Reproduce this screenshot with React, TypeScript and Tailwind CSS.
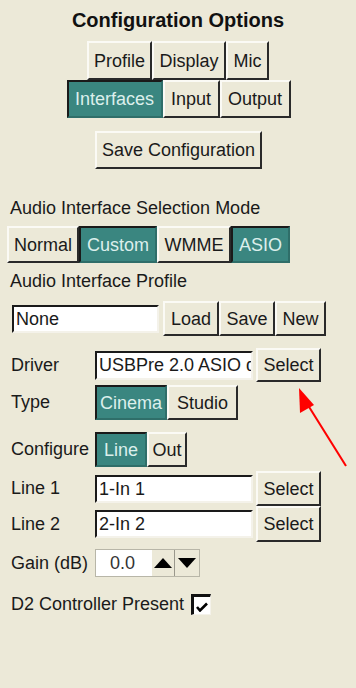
import React from "react";

const font = { fontFamily: '"Liberation Sans", Arial, sans-serif' };

function Btn({
  label,
  selected = false,
  className = "",
}: {
  label: string;
  selected?: boolean;
  className?: string;
}) {
  return (
    <div
      className={
        "flex items-center justify-center text-[18px] leading-none border-2 whitespace-nowrap " +
        (selected
          ? "bg-[#3a8680] text-[#dcefec] border-t-[#1a1a1a] border-l-[#1a1a1a] border-r-[#2f6e69] border-b-[#2f6e69] "
          : "bg-[#ece9d8] text-[#1a1a1a] border-t-[#fbfaf5] border-l-[#fbfaf5] border-r-[#2a2a2a] border-b-[#2a2a2a] ") +
        className
      }
    >
      {label}
    </div>
  );
}

function Field({ value, className = "" }: { value: string; className?: string }) {
  return (
    <div
      className={
        "bg-white border-2 border-t-[#1a1a1a] border-l-[#1a1a1a] border-r-[#f4f2ea] border-b-[#f4f2ea] text-[18px] leading-none flex items-center pl-[2px] overflow-hidden whitespace-nowrap text-[#1a1a1a] " +
        className
      }
    >
      <span className="whitespace-nowrap">{value}</span>
    </div>
  );
}

export default function App() {
  return (
    <div
      style={font}
      className="w-[356px] h-[688px] bg-[#ece9d8] text-[#1a1a1a] relative overflow-hidden"
    >
      <div className="pt-[9px] flex flex-col items-center">
        <div className="text-[20px] font-bold leading-[23px] text-[#111]">Configuration Options</div>
        <div className="flex mt-[9px] h-[39px]">
          <Btn label="Profile" className="w-[65px]" />
          <Btn label="Display" className="w-[74px]" />
          <Btn label="Mic" className="w-[43px]" />
        </div>
        <div className="flex h-[38px] ml-[1px]">
          <Btn label="Interfaces" selected className="w-[96px]" />
          <Btn label="Input" className="w-[57px]" />
          <Btn label="Output" className="w-[71px]" />
        </div>
        <div className="flex h-[38px] mt-[13px] ml-[1px]">
          <Btn label="Save Configuration" className="w-[167px]" />
        </div>
      </div>

      <div className="pl-[10px] mt-[29px] text-[18px] leading-[21px]">Audio Interface Selection Mode</div>
      <div className="flex h-[37px] ml-[7px] mt-[7px]">
        <Btn label="Normal" className="w-[72px]" />
        <Btn label="Custom" selected className="w-[78px]" />
        <Btn label="WMME" className="w-[74px]" />
        <Btn label="ASIO" selected className="w-[59px]" />
      </div>
      <div className="pl-[10px] mt-[8px] text-[18px] leading-[21px]">Audio Interface Profile</div>
      <div className="flex items-center ml-[12px] mt-[9px] h-[35px]">
        <Field value="None" className="w-[147px] h-[28px]" />
        <div className="flex h-[35px] ml-[4px]">
          <Btn label="Load" className="w-[56px]" />
          <Btn label="Save" className="w-[56px]" />
          <Btn label="New" className="w-[51px]" />
        </div>
      </div>

      <div className="flex items-center mt-[12px] h-[34px]">
        <div className="w-[95px] pl-[11px] text-[18px]">Driver</div>
        <Field value="USBPre 2.0 ASIO driver" className="w-[158px] h-[29px]" />
        <Btn label="Select" className="w-[65px] h-[34px] ml-[3px]" />
      </div>
      <div className="flex items-center mt-[3px] h-[35px]">
        <div className="w-[95px] pl-[11px] text-[18px]">Type</div>
        <Btn label="Cinema" selected className="w-[72px] h-[35px]" />
        <Btn label="Studio" className="w-[71px] h-[35px]" />
      </div>
      <div className="flex items-center mt-[12px] h-[35px]">
        <div className="w-[95px] pl-[11px] text-[18px] whitespace-nowrap">Configure</div>
        <Btn label="Line" selected className="w-[52px] h-[35px]" />
        <Btn label="Out" className="w-[40px] h-[35px]" />
      </div>
      <div className="flex items-center mt-[4px] h-[35px]">
        <div className="w-[95px] pl-[11px] text-[18px]">Line 1</div>
        <Field value="1-In 1" className="w-[158px] h-[28px]" />
        <Btn label="Select" className="w-[65px] h-[35px] ml-[3px]" />
      </div>
      <div className="flex items-center h-[36px]">
        <div className="w-[95px] pl-[11px] text-[18px]">Line 2</div>
        <Field value="2-In 2" className="w-[158px] h-[28px]" />
        <Btn label="Select" className="w-[65px] h-[36px] ml-[3px]" />
      </div>
      <div className="flex items-center mt-[7px] h-[28px]">
        <div className="w-[95px] pl-[11px] text-[18px] whitespace-nowrap">Gain (dB)</div>
        <div className="flex h-[28px] w-[105px] border border-[#b8b6a8] bg-white">
          <div className="flex-1 flex items-center pl-[14px] text-[18px] text-[#333]">0.0</div>
          <div className="w-[23px] bg-[#ece9d8] border-r border-[#9a988c] flex items-center justify-center">
            <svg width="18" height="10" viewBox="0 0 18 10"><polygon points="9,0 18,10 0,10" fill="#000" /></svg>
          </div>
          <div className="w-[24px] bg-[#ece9d8] flex items-center justify-center">
            <svg width="18" height="10" viewBox="0 0 18 10"><polygon points="0,0 18,0 9,10" fill="#000" /></svg>
          </div>
        </div>
      </div>
      <div className="flex items-center mt-[17px] h-[21px]">
        <div className="pl-[11px] text-[18px] whitespace-nowrap w-[191px]">D2 Controller Present</div>
        <div className="w-[20px] h-[21px] bg-white border-t-[3px] border-l-[3px] border-r border-b border-[#111] border-r-[#f4f2ea] border-b-[#f4f2ea] flex items-end justify-center pb-[2px]">
          <svg width="12" height="10" viewBox="0 0 12 10">
            <path d="M1 5 L4 8.5 L11 1.5" stroke="#000" strokeWidth="2.6" fill="none" />
          </svg>
        </div>
      </div>

      <svg className="absolute left-0 top-0 pointer-events-none" width="356" height="688">
        <line x1="346" y1="466" x2="306" y2="402" stroke="#ff0000" strokeWidth="2" />
        <polygon points="299,388 314,405 300,413" fill="#ff0000" />
      </svg>
    </div>
  );
}
